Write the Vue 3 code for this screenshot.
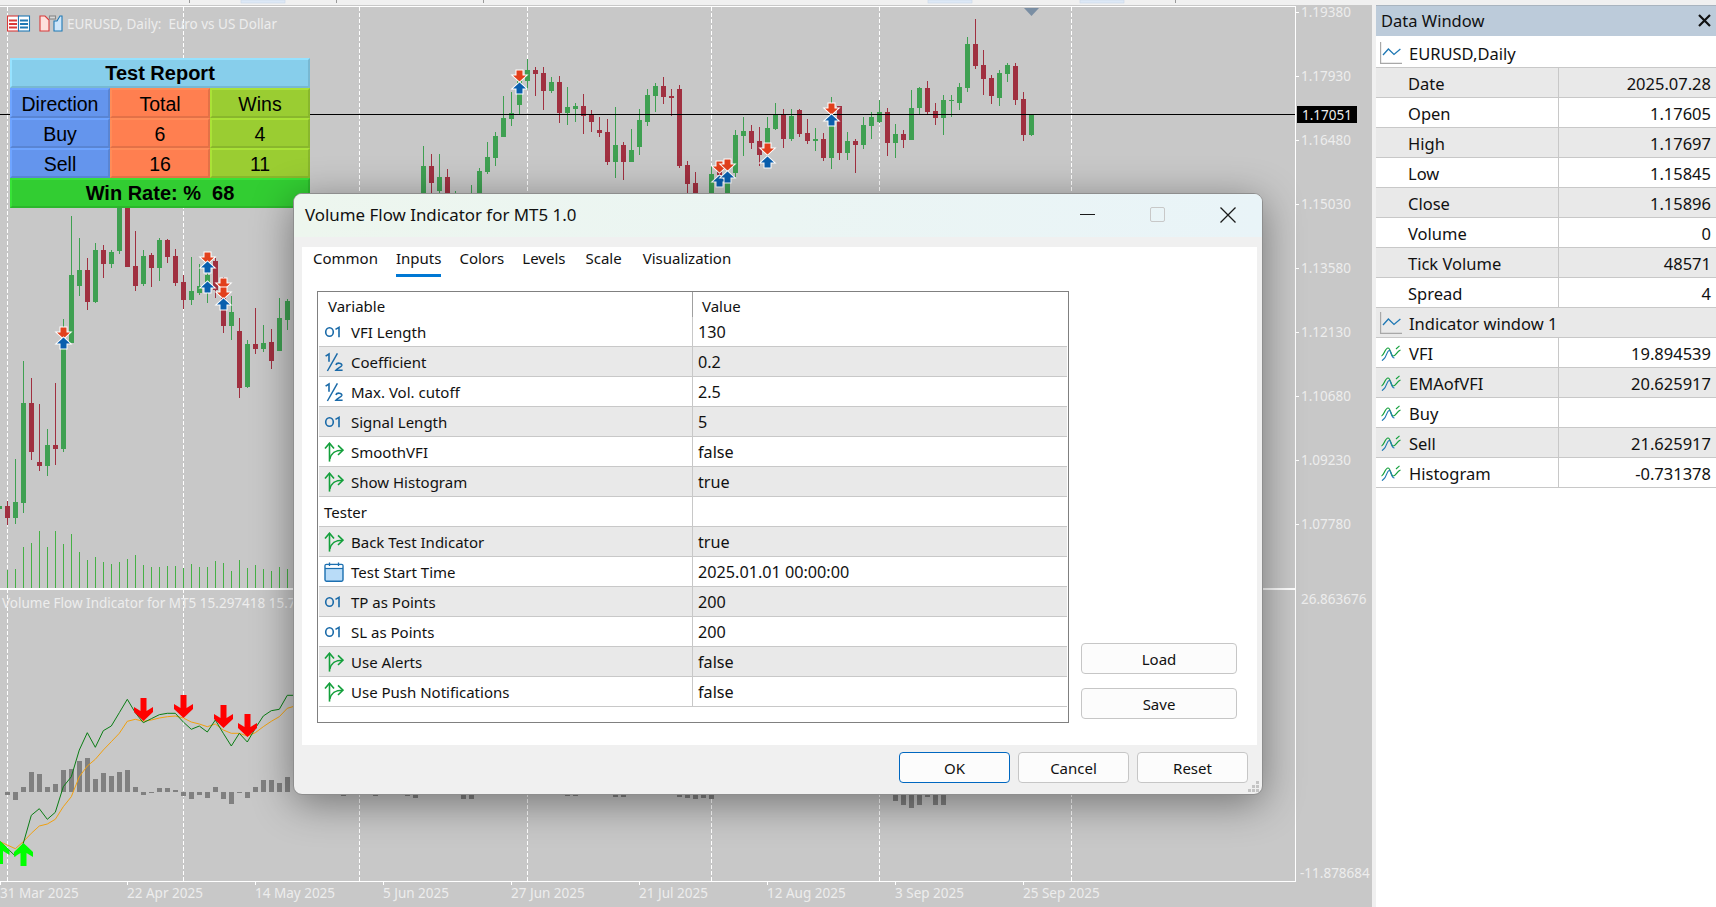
<template>
  <div class="page">
    <!-- icon sprites -->
    <svg class="sprites" width="0" height="0" aria-hidden="true">
      <symbol id="i-int" viewBox="0 0 20 20">
        <ellipse cx="5.5" cy="10" rx="3.8" ry="4.3" fill="none" stroke="#1a6aa8" stroke-width="1.6" />
        <path d="M11.5 7.4 L15 5.4 V15.2" fill="none" stroke="#1a6aa8" stroke-width="1.6" />
      </symbol>
      <symbol id="i-dbl" viewBox="0 0 20 20">
        <path d="M1.6 4.2 L5 2 V9.8" fill="none" stroke="#1a6aa8" stroke-width="1.6" />
        <path d="M3.4 19 L13.4 1.4" fill="none" stroke="#1a6aa8" stroke-width="1.5" />
        <path d="M12 13 C12.6 10.4 18.2 10.6 17.8 13.4 C17.5 15 13.6 16 12 18.2 H18.6" fill="none" stroke="#1a6aa8" stroke-width="1.6" />
      </symbol>
      <symbol id="i-bool" viewBox="0 0 20 20">
        <g fill="none" stroke="#14a03c" stroke-width="1.6">
          <path d="M5.5 19.6 V1.4" />
          <path d="M1 6.6 L5.5 1.2 L10 6.6" />
          <path d="M5.8 17 C7 11.5 10 8.2 18.8 8.2" />
          <path d="M14 3.4 L19 8.2 L14 13" />
        </g>
      </symbol>
      <symbol id="i-date" viewBox="0 0 20 20">
        <rect x="1" y="2.4" width="18" height="16.8" rx="1.4" fill="#b9dcf8" stroke="#1c6fb0" stroke-width="1.4" />
        <path d="M1 6.4 H19" stroke="#1c6fb0" stroke-width="1.4" />
        <rect x="1.8" y="3.2" width="16.4" height="2.6" fill="#fff" />
        <path d="M5.5 .6 V4 M14.5 .6 V4" stroke="#1c6fb0" stroke-width="1.3" />
      </symbol>
      <symbol id="i-chart" viewBox="0 0 22 22">
        <path d="M.6 0 V21.4 H22" fill="none" stroke="#a8a8a8" stroke-width="1.2" />
        <path d="M3 13 L8.4 7 L14 12.4 L20.4 7" fill="none" stroke="#1f78b4" stroke-width="1.3" />
      </symbol>
      <symbol id="i-wave" viewBox="0 0 20 16">
        <path d="M.5 11 C3 10.5 4 3 7 3 C10 3 9.5 11 12 11 C15 11 15.5 6.5 19.5 5" fill="none" stroke="#14a03c" stroke-width="1.2" />
        <path d="M1 15.6 L3 13.8 C5.5 12 6 5 8.5 5.5 C10.5 6 10 13 13.5 13" fill="none" stroke="#1f78b4" stroke-width="1.2" />
        <path d="M15 4 L18.5 .8" fill="none" stroke="#14a03c" stroke-width="1.1" />
      </symbol>
    </svg>

    <svg class="topbar" width="1716" height="5">
      <rect v-for="t in topTabs" :key="t" :x="t" y="0" width="44" height="3" fill="#dde8f6" stroke="#c9d6e6" stroke-width=".6" />
      <rect v-for="t in topTicks" :key="t" :x="t" y="0" width="1" height="3" fill="#9a9a9a" />
    </svg>

    <div class="main">
      <div class="chart">
        <svg class="chart-svg" width="1372" height="902" viewBox="0 5 1372 902" shape-rendering="crispEdges">
          <line v-for="x in separators" :key="'s' + x" :x1="x + .5" :x2="x + .5" y1="7" y2="881" stroke="#fff" stroke-dasharray="4 2" />
          <rect v-for="v in volumes" :key="'v' + v.x" :x="v.x" :y="v.y" width="1" :height="588 - v.y" fill="#46b046" />
          <g v-for="c in candles" :key="'c' + c.i" :fill="c.color">
            <rect :x="c.x + 2" :y="c.high" width="1" :height="c.low - c.high" />
            <rect :x="c.x" :y="c.top" width="5" :height="c.bot - c.top" />
          </g>
          <rect v-for="h in histogram" :key="'h' + h.x" :x="h.x" :y="h.y" width="5" :height="h.h" fill="#808080" />

          <!-- frame, scale ticks and crosshair -->
          <rect x="0" y="6" width="1295" height="1" fill="#fff" />
          <rect x="1295" y="6" width="1" height="876" fill="#fff" />
          <rect x="0" y="881" width="1295" height="1" fill="#fff" />
          <rect x="0" y="588" width="1295" height="2" fill="#fff" />
          <rect v-for="p in prices" :key="'pt' + p.y" x="1295" :y="p.y" width="4" height="1" fill="#fff" />
          <rect v-for="d in dates" :key="'dt' + d.x" :x="d.x" y="881" width="1" height="4" fill="#fff" />
          <rect x="0" y="114" width="1295" height="1" fill="#000" />
          <polygon points="1024,8 1039,8 1031.5,16" fill="#7a8ea3" shape-rendering="auto" />

          <g shape-rendering="auto">
            <polyline :points="emaLine" fill="none" stroke="#f0a010" stroke-width="1" />
            <polyline :points="vfiLine" fill="none" stroke="#0a7d14" stroke-width="1" />
            <polygon v-for="a in bigArrows" :key="'ba' + a.x" :points="a.points" :fill="a.fill" />
            <polygon v-for="(a, n) in smallArrows" :key="'sa' + n" :points="a.points" :fill="a.fill" stroke="#fff" stroke-width="2" paint-order="stroke" />

            <text class="lbl" x="67" y="29">EURUSD, Daily:&#160;&#160;Euro vs US Dollar</text>
            <text class="lbl" x="2" y="608">Volume Flow Indicator for MT5 15.297418 15.706</text>
            <text v-for="p in prices" :key="'p' + p.y" class="lbl" x="1301" :y="p.y + 5">{{ p.text }}</text>
            <text class="lbl" x="1301" y="604">26.863676</text>
            <text class="lbl" x="1300" y="878">-11.878684</text>
            <text v-for="d in dates" :key="'d' + d.x" class="lbl" :x="d.x" y="898">{{ d.text }}</text>
            <rect x="1297" y="106" width="60" height="17" fill="#000" shape-rendering="crispEdges" />
            <text class="lbl" x="1302" y="120">1.17051</text>
          </g>
        </svg>

        <!-- chart title icons -->
        <svg class="title-icons" width="56" height="18" viewBox="0 0 56 18">
          <g fill="none" stroke-width="1.1">
            <rect x=".5" y="1" width="11" height="15" fill="#fff" stroke="#d83a3a" />
            <rect x="11.5" y="1" width="11" height="15" fill="#fff" stroke="#1f78b4" />
            <path d="M2 5.5 H10 M2 9 H10 M2 12.5 H10" stroke="#d83a3a" stroke-width="2" />
            <path d="M13 5.5 H21 M13 9 H21 M13 12.5 H21" stroke="#1f78b4" stroke-width="2" />
            <path d="M33 1 H38 L42 5 V16 H33 Z" fill="#fde0dc" stroke="#d83a3a" />
            <path d="M50 6 L53 1 H55 V16 H47 V6 Z" fill="#cde6fa" stroke="#1f78b4" />
            <rect x="42.5" y="1" width="6" height="3" fill="#d8d8d8" stroke="#888" />
          </g>
        </svg>

        <div class="report">
          <div class="cell sky wide bold">Test Report</div>
          <template v-for="row in reportRows" :key="row[0]">
            <div class="cell blue">{{ row[0] }}</div>
            <div class="cell coral">{{ row[1] }}</div>
            <div class="cell lime">{{ row[2] }}</div>
          </template>
          <div class="cell green wide bold">Win Rate: %&#160;&#160;68</div>
        </div>
      </div>

      <div class="data-gap"></div>

      <aside class="data-window">
        <div class="dw-head">
          <span>Data Window</span>
          <svg width="13" height="13" viewBox="0 0 13 13"><path d="M1 1 L12 12 M12 1 L1 12" stroke="#111" stroke-width="2.2" /></svg>
        </div>
        <div class="dw-body">
          <div v-for="(r, n) in dataRows" :key="r.name" class="dw-row" :class="{ alt: n % 2 === 1, group: r.group }">
            <div class="dw-name" :class="{ 'has-icon': r.icon }">
              <svg v-if="r.icon === 'chart'" width="22" height="22"><use href="#i-chart" /></svg>
              <svg v-if="r.icon === 'wave'" width="20" height="16" class="wave"><use href="#i-wave" /></svg>
              <span>{{ r.name }}</span>
            </div>
            <div v-if="!r.group" class="dw-value">{{ r.value }}</div>
          </div>
        </div>
      </aside>
    </div>

    <!-- properties dialog -->
    <div class="dialog">
      <div class="dlg-title">
        <span>Volume Flow Indicator for MT5 1.0</span>
        <div class="win-btns">
          <i class="win-min"></i>
          <i class="win-max"></i>
          <svg width="16" height="16" viewBox="0 0 16 16"><path d="M.5 .5 L15.5 15.5 M15.5 .5 L.5 15.5" stroke="#1a1a1a" stroke-width="1.3" /></svg>
        </div>
      </div>

      <div class="dlg-panel">
        <div class="tabs">
          <span v-for="t in tabs" :key="t" class="tab" :class="{ active: t === 'Inputs' }">{{ t }}</span>
        </div>
        <div class="dlg-content">
          <div class="grid">
            <div class="grid-head">
              <div class="h-var">Variable</div>
              <div class="h-val">Value</div>
            </div>
            <div v-for="(r, n) in inputRows" :key="r.name" class="grid-row" :class="{ alt: n % 2 === 1 }">
              <div class="g-name">
                <svg v-if="r.icon" :width="20" :height="20"><use :href="'#i-' + r.icon" /></svg>
                <span>{{ r.name }}</span>
              </div>
              <div class="g-value">{{ r.value }}</div>
            </div>
          </div>
          <div class="side-btns">
            <button class="btn">Load</button>
            <button class="btn">Save</button>
          </div>
        </div>
      </div>

      <div class="dlg-foot">
        <button class="btn foot primary">OK</button>
        <button class="btn foot">Cancel</button>
        <button class="btn foot">Reset</button>
      </div>

      <svg class="grip" width="12" height="12" viewBox="0 0 12 12">
        <g fill="#c4c4c4">
          <rect x="8" y="0" width="3" height="3" />
          <rect x="4" y="4" width="3" height="3" /><rect x="8" y="4" width="3" height="3" />
          <rect x="0" y="8" width="3" height="3" /><rect x="4" y="8" width="3" height="3" /><rect x="8" y="8" width="3" height="3" />
        </g>
      </svg>
    </div>
  </div>
</template>

<script setup>
const topTabs = [241, 928, 1080]
const topTicks = [189, 336, 483, 1175]
const separators = [7, 183, 359, 527, 711, 879, 1071]

// [color, body top, body bottom, high, low] read off the chart; y relative to base
const candleGroups = [
  {
    start: -1, base: 180, rows: [
      ['g', 978, 986, 978, 986], ['r', 978, 1013, 963, 1035], ['g', 966, 1013, 838, 1032], ['g', 669, 968, 543, 998],
      ['r', 669, 815, 594, 840], ['r', 846, 857, 672, 873], ['g', 795, 857, 747, 888], ['r', 795, 806, 609, 855],
      ['g', 505, 806, 417, 816], ['g', 285, 488, 108, 488], ['g', 270, 317, 174, 348], ['r', 270, 365, 234, 390],
      ['g', 210, 365, 189, 369], ['r', 210, 251, 195, 294], ['g', 216, 251, 210, 264], ['g', -60, 213, -60, 222],
      ['r', -60, 261, -60, 261], ['r', 258, 318, 153, 333], ['g', 228, 312, 210, 318], ['r', 225, 264, 219, 321],
      ['g', 180, 264, 174, 303], ['r', 180, 231, 177, 249], ['r', 228, 309, 207, 318], ['r', 306, 360, 285, 387],
      ['g', 333, 360, 231, 375], ['g', 318, 339, 252, 345], ['g', 285, 318, 240, 369], ['r', 243, 330, 234, 354],
      ['r', 330, 438, 290, 459], ['g', 396, 438, 348, 480], ['r', 453, 624, 414, 654], ['g', 492, 621, 480, 624],
      ['r', 492, 507, 384, 522], ['g', 489, 507, 435, 516], ['r', 486, 543, 447, 567], ['g', 414, 513, 354, 513],
      ['g', 363, 420, 357, 450],
    ],
  },
  {
    start: 52, base: 40, rows: [
      ['g', 378, 470, 318, 470], ['r', 378, 429, 342, 470], ['g', 411, 453, 342, 470], ['r', 411, 470, 387, 470],
      ['g', 460, 470, 453, 470], null, ['g', 460, 470, 435, 470], ['g', 393, 470, 384, 470],
      ['g', 351, 396, 306, 402], ['g', 288, 354, 276, 378], ['g', 234, 291, 168, 291], ['g', 219, 237, 156, 258],
      ['g', 120, 195, 110, 222], ['g', 90, 123, 57, 150], ['r', 90, 102, 81, 168], ['r', 99, 153, 81, 210],
      ['g', 126, 153, 111, 159], ['r', 126, 219, 108, 249], ['g', 201, 219, 141, 255], ['g', 198, 207, 189, 246],
      ['r', 198, 228, 162, 282], ['r', 225, 246, 210, 276], ['r', 270, 279, 231, 291], ['r', 276, 366, 237, 375],
      ['g', 315, 366, 201, 414], ['r', 315, 366, 306, 420], ['g', 330, 366, 267, 366], ['g', 240, 321, 207, 345],
      ['g', 165, 246, 147, 258], ['g', 138, 168, 129, 216], ['r', 138, 171, 111, 192], ['r', 168, 174, 147, 228],
      ['r', 147, 378, 135, 384], ['r', 375, 432, 363, 470], ['r', 429, 470, 396, 470],
    ],
  },
  {
    start: 88, base: 40, rows: [
      ['g', 402, 470, 378, 470], ['r', 390, 405, 378, 410], ['g', 400, 470, 380, 470], ['g', 285, 399, 270, 411],
      ['g', 273, 288, 231, 348], ['r', 273, 309, 255, 327], ['r', 303, 345, 261, 378], ['g', 264, 315, 231, 380],
      ['g', 222, 267, 189, 270], ['r', 222, 297, 207, 324], ['g', 228, 297, 207, 303], ['r', 210, 282, 207, 291],
      ['r', 279, 303, 237, 312], ['g', 297, 303, 264, 333], ['r', 297, 354, 279, 363], ['g', 222, 354, 171, 387],
      ['r', 198, 339, 198, 360], ['g', 303, 339, 276, 360], ['r', 303, 315, 297, 399], ['g', 255, 315, 231, 327],
      ['g', 231, 258, 216, 297], ['g', 216, 246, 180, 249], ['r', 216, 309, 204, 348], ['g', 282, 309, 252, 354],
      ['r', 282, 300, 270, 324], ['g', 204, 300, 150, 300], ['g', 144, 204, 141, 225], ['r', 144, 216, 123, 225],
      ['r', 213, 234, 189, 255], ['g', 180, 234, 165, 285], ['g', 180, 183, 165, 231], ['g', 141, 189, 129, 210],
    ],
  },
  {
    start: 120, base: 0, rows: [
      ['g', 132, 264, 111, 276], ['r', 132, 198, 57, 207], ['r', 195, 237, 150, 285], ['r', 234, 288, 225, 312],
      ['g', 219, 294, 210, 318], ['g', 195, 222, 189, 246], ['r', 198, 300, 189, 315], ['r', 297, 405, 276, 423],
      ['g', 342, 405, 342, 408],
    ],
  },
]

const candles = candleGroups.flatMap(g =>
  g.rows.map((r, n) => {
    if (!r) return null
    const y = v => Math.round(g.base + v / 3)
    const i = g.start + n
    return { i, x: 5 + 8 * i, color: r[0] === 'g' ? '#3fa052' : '#a03040', top: y(r[1]), bot: y(r[2]), high: y(r[3]), low: y(r[4]) }
  }).filter(Boolean)
)

const volumeTops = [1170, 1167, 1101, 1089, 1053, 1101, 1053, 1092, 1062, 1116, 1140, 1131, 1146, 1152, 1146, 1137, 1125, 1155, 1161, 1161, 1158, 1158, 1164, 1152, 1161, 1161, 1143, 1149, 1173, 1140, 1164, 1155, 1167, 1173, 1161, 1167]
const volumes = volumeTops.map((z, i) => ({ x: 7 + 8 * i, y: Math.round(180 + z / 3) }))

// histogram bar ends, zoomed y, zero level at 636
const histEnds = [646, 660, 621, 576, 582, 621, 612, 570, 567, 543, 534, 597, 579, 588, 576, 570, 621, 645, 637, 624, 624, 630, 648, 657, 645, 654, 621, 657, 672, 637, 654, 621, 600, 600, 609, 591]
const histogram = histEnds.map((z, i) => {
  const end = 580 + z / 3
  const zero = 792
  return { x: 5 + 8 * i, y: Math.round(Math.min(end, zero)), h: Math.max(1, Math.round(Math.abs(end - zero))) }
})
// the few bars that show below the dialog
const lowBars = [[42, 796], [46, 796], [50, 796], [51, 798], [57, 799], [58, 799], [70, 796], [71, 796], [76, 797], [77, 797], [84, 797], [85, 798], [86, 799], [87, 798], [88, 799], [111, 801], [112, 805], [113, 808], [114, 805], [115, 797], [116, 805], [117, 805], [128, 795]]
lowBars.forEach(([i, end]) => histogram.push({ x: 5 + 8 * i, y: 792, h: end - 792 }))

const vfiPts = [[0, 785], [22, 805], [46, 828], [70, 790], [94, 706], [118, 686], [142, 718], [166, 697], [190, 620], [214, 590], [238, 510], [262, 458], [286, 502], [310, 452], [334, 438], [358, 398], [382, 358], [406, 398], [430, 428], [454, 416], [478, 404], [502, 400], [526, 400], [550, 426], [574, 448], [598, 438], [622, 456], [646, 420], [670, 460], [694, 498], [718, 460], [742, 486], [766, 445], [790, 408], [814, 392], [838, 388], [862, 346], [885, 346]]
const emaPts = [[0, 785], [22, 795], [46, 806], [70, 785], [94, 760], [118, 738], [142, 732], [166, 718], [190, 680], [214, 650], [238, 590], [262, 558], [286, 538], [310, 510], [334, 485], [358, 460], [382, 424], [406, 418], [430, 424], [454, 420], [478, 414], [502, 410], [526, 408], [550, 414], [574, 426], [598, 432], [622, 440], [646, 432], [670, 450], [694, 460], [718, 460], [742, 468], [766, 458], [790, 440], [814, 424], [838, 410], [862, 385], [885, 378]]
const toLine = pts => pts.map(([x, y]) => `${(x / 3).toFixed(1)},${(580 + y / 3).toFixed(1)}`).join(' ')
const vfiLine = toLine(vfiPts)
const emaLine = toLine(emaPts)

// thick signal arrows in the indicator pane
const bigDown = (cx, top) => `${cx - 3},${top} ${cx + 3},${top} ${cx + 3},${top + 13} ${cx + 9.5},${top + 9} ${cx + 9.5},${top + 14} ${cx},${top + 23} ${cx - 9.5},${top + 14} ${cx - 9.5},${top + 9} ${cx - 3},${top + 13}`
const bigUp = (cx, tip) => `${cx},${tip} ${cx + 9.5},${tip + 9} ${cx + 9.5},${tip + 14} ${cx + 3},${tip + 10} ${cx + 3},${tip + 23} ${cx - 3},${tip + 23} ${cx - 3},${tip + 10} ${cx - 9.5},${tip + 14} ${cx - 9.5},${tip + 9}`
const bigArrows = [
  { x: 143, points: bigDown(143.5, 698), fill: '#ff0000' },
  { x: 183, points: bigDown(183.5, 695), fill: '#ff0000' },
  { x: 223, points: bigDown(223.5, 705), fill: '#ff0000' },
  { x: 247, points: bigDown(247.5, 714), fill: '#ff0000' },
  { x: 0, points: bigUp(0, 841), fill: '#00ff00' },
  { x: 23, points: bigUp(23.5, 843), fill: '#00ff00' },
]

// small trade marks on the candles
const mark = (cx, cy, up) => {
  const s = up ? -1 : 1
  const p = [[-3, -5.5], [3, -5.5], [3, -.5], [6.5, -.5], [0, 5.5], [-6.5, -.5], [-3, -.5]]
  return { points: p.map(([x, y]) => `${cx + x},${cy + y * s}`).join(' '), fill: up ? '#0a5fae' : '#e2401c' }
}
const smallArrows = [
  mark(63.5, 333, false), mark(63.5, 343, true),
  mark(207.5, 258, false), mark(207.5, 267, true), mark(207.5, 287, true),
  mark(223.5, 284, false), mark(223.5, 293, false), mark(223.5, 304, true),
  mark(519.5, 76, false), mark(519.5, 88, true),
  mark(719.5, 167, false), mark(719.5, 181, true),
  mark(727.5, 165, false), mark(727.5, 177, true),
  mark(767.5, 149, false), mark(767.5, 162, true),
  mark(831.5, 109, false), mark(831.5, 120, true),
]

const prices = ['1.19380', '1.17930', '1.16480', '1.15030', '1.13580', '1.12130', '1.10680', '1.09230', '1.07780']
  .map((text, i) => ({ text, y: 12 + 64 * i }))
const dates = [[0, '31 Mar 2025'], [127, '22 Apr 2025'], [255, '14 May 2025'], [383, '5 Jun 2025'], [511, '27 Jun 2025'], [639, '21 Jul 2025'], [767, '12 Aug 2025'], [895, '3 Sep 2025'], [1023, '25 Sep 2025']]
  .map(([x, text]) => ({ x, text }))

const reportRows = [
  ['Direction', 'Total', 'Wins'],
  ['Buy', '6', '4'],
  ['Sell', '16', '11'],
]

const dataRows = [
  { name: 'EURUSD,Daily', icon: 'chart', group: true },
  { name: 'Date', value: '2025.07.28' },
  { name: 'Open', value: '1.17605' },
  { name: 'High', value: '1.17697' },
  { name: 'Low', value: '1.15845' },
  { name: 'Close', value: '1.15896' },
  { name: 'Volume', value: '0' },
  { name: 'Tick Volume', value: '48571' },
  { name: 'Spread', value: '4' },
  { name: 'Indicator window 1', icon: 'chart', group: true },
  { name: 'VFI', icon: 'wave', value: '19.894539' },
  { name: 'EMAofVFI', icon: 'wave', value: '20.625917' },
  { name: 'Buy', icon: 'wave', value: '' },
  { name: 'Sell', icon: 'wave', value: '21.625917' },
  { name: 'Histogram', icon: 'wave', value: '-0.731378' },
]

const tabs = ['Common', 'Inputs', 'Colors', 'Levels', 'Scale', 'Visualization']

const inputRows = [
  { icon: 'int', name: 'VFI Length', value: '130' },
  { icon: 'dbl', name: 'Coefficient', value: '0.2' },
  { icon: 'dbl', name: 'Max. Vol. cutoff', value: '2.5' },
  { icon: 'int', name: 'Signal Length', value: '5' },
  { icon: 'bool', name: 'SmoothVFI', value: 'false' },
  { icon: 'bool', name: 'Show Histogram', value: 'true' },
  { icon: '', name: 'Tester', value: '' },
  { icon: 'bool', name: 'Back Test Indicator', value: 'true' },
  { icon: 'date', name: 'Test Start Time', value: '2025.01.01 00:00:00' },
  { icon: 'int', name: 'TP as Points', value: '200' },
  { icon: 'int', name: 'SL as Points', value: '200' },
  { icon: 'bool', name: 'Use Alerts', value: 'false' },
  { icon: 'bool', name: 'Use Push Notifications', value: 'false' },
]
</script>

<style>
html, body {
  margin: 0;
  overflow: hidden;
}
</style>

<style scoped>
.page {
  position: relative;
  width: 1716px;
  height: 907px;
  display: flex;
  flex-direction: column;
  overflow: hidden;
  background: #f0f0f0;
  font-family: "Noto Sans", "Open Sans", sans-serif;
  font-size: 15px;
  color: #111;
}
.sprites {
  position: absolute;
}
.topbar {
  display: block;
  flex: none;
}
.main {
  flex: 1;
  display: flex;
  min-height: 0;
}

/* chart */
.chart {
  position: relative;
  width: 1372px;
  background: #c8c8c8;
}
.chart-svg {
  display: block;
  overflow: visible;
}
.lbl {
  font-family: "Noto Sans", sans-serif;
  font-size: 13.5px;
  fill: #ededed;
}
.title-icons {
  position: absolute;
  left: 7px;
  top: 10px;
}

.report {
  position: absolute;
  left: 10px;
  top: 53px;
  width: 300px;
  display: grid;
  grid-template-columns: repeat(3, 100px);
  grid-auto-rows: 30px;
  font-family: "Liberation Sans", Arial, sans-serif;
  font-size: 19.5px;
  color: #000;
}
.cell {
  display: flex;
  align-items: center;
  justify-content: center;
  box-sizing: border-box;
  border-style: solid;
  border-width: 2px;
  padding-top: 2px;
}
.wide {
  grid-column: span 3;
}
.bold {
  font-weight: 700;
  font-size: 20px;
  padding-top: 0;
}
.sky { background: #87ceeb; border-color: #96e2ff #78b8d2 #78b8d2 #96e2ff; }
.blue { background: #6495ed; border-color: #6ea4ff #5985d3 #5985d3 #6ea4ff; }
.coral { background: #ff7f50; border-color: #ff8c58 #e37147 #e37147 #ff8c58; }
.lime { background: #9acd32; border-color: #a9e237 #89b72c #89b72c #a9e237; }
.green { background: #32cd32; border-color: #37e237 #2cb72c #2cb72c #37e237; }

/* data window */
.data-gap {
  width: 4px;
  background: #f0f0f0;
}
.data-window {
  flex: 1;
  background: #fff;
  min-width: 0;
}
.dw-head {
  box-sizing: border-box;
  height: 33px;
  padding: 0 5px 2px;
  display: flex;
  align-items: center;
  justify-content: space-between;
  background: #bccbda;
  border-top: 1px solid #a9b4bf;
  border-bottom: 2px solid #fff;
  font-size: 16.5px;
}
.dw-row {
  box-sizing: border-box;
  height: 30px;
  display: flex;
  border-bottom: 1px solid #c8c8c8;
  font-size: 16.5px;
}
.dw-row.alt {
  background: #e9e9e9;
}
.dw-name {
  box-sizing: border-box;
  width: 183px;
  padding: 1px 0 0 32px;
  display: flex;
  align-items: center;
  gap: 7px;
  border-right: 1px solid #c8c8c8;
  white-space: nowrap;
}
.dw-name.has-icon {
  padding-left: 4px;
}
.dw-name .wave {
  margin: 0 1px 0 1px;
  flex: none;
}
.dw-row.group .dw-name {
  width: 100%;
  border-right: 0;
}
.dw-value {
  flex: 1;
  display: flex;
  align-items: center;
  justify-content: flex-end;
  padding: 1px 5px 0 0;
}

/* dialog */
.dialog {
  position: absolute;
  left: 293px;
  top: 193px;
  box-sizing: border-box;
  width: 970px;
  height: 602px;
  display: flex;
  flex-direction: column;
  background: #f0f0f0;
  border-radius: 9px;
  border: 1px solid #8e8e8e;
  box-shadow: 0 8px 40px rgba(0, 0, 0, .42);
  overflow: hidden;
}
.dlg-title {
  flex: none;
  box-sizing: border-box;
  height: 43px;
  padding: 0 26px 2px 11px;
  display: flex;
  align-items: center;
  justify-content: space-between;
  background: linear-gradient(90deg, #edf6ee, #e9f4f8);
  font-size: 16.9px;
}
.win-btns {
  display: flex;
  align-items: center;
  gap: 55px;
}
.win-min {
  width: 15px;
  height: 1px;
  background: #1a1a1a;
}
.win-max {
  box-sizing: border-box;
  width: 15px;
  height: 15px;
  border: 1px solid #c8c8c8;
  border-radius: 2px;
}
.dlg-panel {
  flex: none;
  box-sizing: border-box;
  height: 498px;
  margin: 10px 5px 0 8px;
  background: #fff;
}
.tabs {
  height: 30px;
  padding-left: 11px;
  display: flex;
  gap: 18px;
  box-sizing: border-box;
}
.tab {
  box-sizing: border-box;
  height: 30px;
  line-height: 22px;
}
.tab:nth-child(5) {
  margin-left: 2px;
}
.tab:nth-child(6) {
  margin-left: 3px;
}
.tab.active {
  border-bottom: 3px solid #0078d4;
}
.dlg-content {
  display: flex;
  align-items: flex-end;
  margin: 14px 0 0 15px;
}
.grid {
  box-sizing: border-box;
  width: 752px;
  height: 432px;
  padding: 0 1px;
  border: 1px solid #808080;
}
.grid-head {
  height: 25px;
  display: flex;
  line-height: 29px;
}
.h-var {
  box-sizing: border-box;
  width: 374px;
  padding-left: 9px;
  border-right: 1px solid #a0a0a0;
}
.h-val {
  padding-left: 9px;
}
.grid-row {
  box-sizing: border-box;
  height: 30px;
  display: flex;
  border-bottom: 1px solid #c8c8c8;
}
.grid-row.alt {
  background: #e9e9e9;
}
.g-name {
  box-sizing: border-box;
  width: 374px;
  padding: 1px 0 0 5px;
  display: flex;
  align-items: center;
  gap: 7px;
  border-right: 1px solid #c8c8c8;
}
.g-value {
  padding-left: 5px;
  font-size: 16.2px;
  line-height: 31px;
}
.side-btns {
  margin: 0 0 4px 12px;
  display: flex;
  flex-direction: column;
  gap: 14px;
}
.btn {
  box-sizing: border-box;
  width: 156px;
  height: 31px;
  padding: 0;
  background: #fcfcfc;
  border: 1px solid #c6c6c6;
  border-radius: 4px;
  font: inherit;
  color: #111;
}
.dlg-foot {
  display: flex;
  justify-content: flex-end;
  gap: 8px;
  margin-top: 7px;
  padding-right: 14px;
}
.btn.foot {
  width: 111px;
}
.btn.primary {
  border-color: #0067c0;
}
.grip {
  position: absolute;
  right: 2px;
  bottom: 1px;
}
</style>
